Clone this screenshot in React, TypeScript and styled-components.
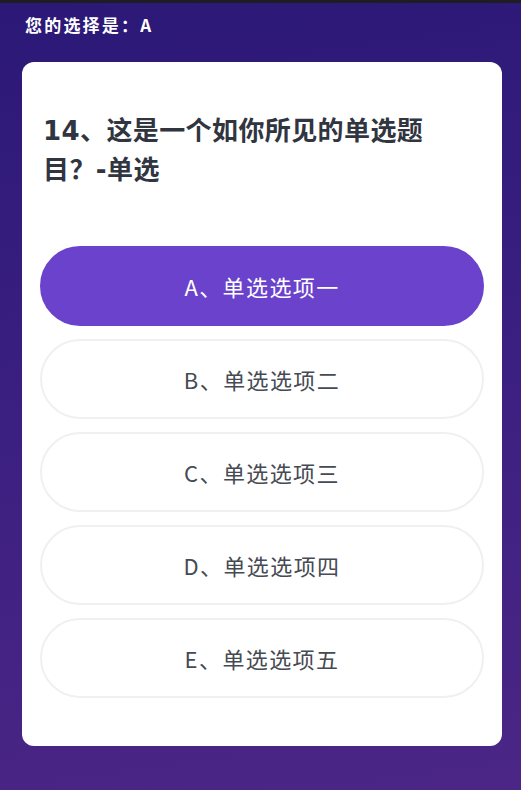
import React from "react";
import styled, { createGlobalStyle } from "styled-components";

const GlobalStyle = createGlobalStyle`
  html, body {
    margin: 0;
    padding: 0;
  }
  body {
    font-family: "Noto Sans CJK SC", "Noto Sans", sans-serif;
    background: #2c1877;
  }
  * { box-sizing: border-box; }
`;

const Page = styled.div`
  min-height: 790px;
  border-top: 3px solid #1e1d24;
  background: linear-gradient(172deg, #2b1877 0%, #3a1f80 45%, #4b2686 100%);
  padding: 0 19px 44px 22px;
  display: flex;
  flex-direction: column;
`;

const Header = styled.div`
  height: 59px;
  padding: 9px 0 0 3px;
  color: #ffffff;
  font-size: 17px;
  font-weight: 700;
  letter-spacing: 2.2px;
  line-height: 26px;
`;

const Card = styled.div`
  background: #ffffff;
  border-radius: 12px;
  padding: 50px 18px 48px 18px;
  display: flex;
  flex-direction: column;
`;

const Title = styled.h2`
  margin: 0 0 56px 3px;
  max-width: 395px;
  font-family: "DejaVu Sans", "Noto Sans CJK SC", sans-serif;
  font-size: 26px;
  font-weight: 700;
  line-height: 39px;
  color: #30353f;
  letter-spacing: 0.4px;
`;

const Options = styled.div`
  display: flex;
  flex-direction: column;
  gap: 13px;
`;

const Option = styled.button<{ $selected?: boolean }>`
  height: 80px;
  width: 100%;
  border-radius: 40px;
  border: 2px solid ${(p) => (p.$selected ? "#6b42cc" : "#f0f0f2")};
  background: ${(p) => (p.$selected ? "#6b42cc" : "#ffffff")};
  color: ${(p) => (p.$selected ? "#ffffff" : "#464a52")};
  font-family: "Noto Sans CJK SC", "Noto Sans", sans-serif;
  font-size: 22px;
  font-weight: 400;
  letter-spacing: 1.4px;
  display: flex;
  align-items: center;
  justify-content: center;
  padding: 0;
  cursor: pointer;
`;

const options = [
  { key: "A", label: "单选选项一" },
  { key: "B", label: "单选选项二" },
  { key: "C", label: "单选选项三" },
  { key: "D", label: "单选选项四" },
  { key: "E", label: "单选选项五" },
];

export default function App() {
  const selected = "A";
  return (
    <>
      <GlobalStyle />
      <Page>
        <Header>您的选择是：{selected}</Header>
        <Card>
          <Title>14、这是一个如你所见的单选题目？-单选</Title>
          <Options>
            {options.map((o) => (
              <Option key={o.key} $selected={o.key === selected}>
                {o.key}、{o.label}
              </Option>
            ))}
          </Options>
        </Card>
      </Page>
    </>
  );
}
